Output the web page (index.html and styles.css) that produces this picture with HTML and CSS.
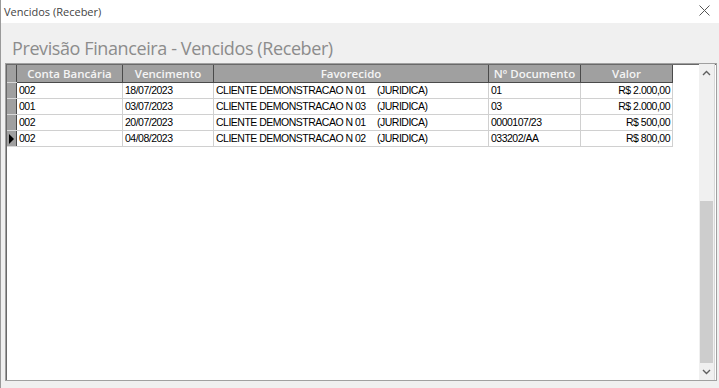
FILE: index.html
```html
<!DOCTYPE html>
<html lang="pt-BR">
  <head>
    <meta charset="UTF-8" />
    <title>Vencidos (Receber)</title>
    <link rel="stylesheet" href="styles.css">
  </head>
  <body>
    <div class="window">
      <!-- Title bar -->
      <div class="titlebar">
        <span class="title">Vencidos (Receber)</span>
        <span class="close">
          <svg width="11" height="11" viewBox="0 0 11 11">
            <path d="M0.5 0.5 L10.5 10.5 M10.5 0.5 L0.5 10.5" stroke="#555" stroke-width="1" fill="none" />
          </svg>
        </span>
      </div>

      <div class="content">
        <h1 class="heading">Previsão Financeira - Vencidos (Receber)</h1>

        <div class="grid">
          <div class="grid-body">
            <table class="data">
              <thead>
                <tr>
                  <th class="ind"></th>
                  <th class="c-conta">Conta Bancária</th>
                  <th class="c-venc">Vencimento</th>
                  <th class="c-fav">Favorecido</th>
                  <th class="c-doc">Nº Documento</th>
                  <th class="c-valor">Valor</th>
                </tr>
              </thead>
              <tbody>
                <tr>
                  <td class="ind"></td>
                  <td>002</td>
                  <td>18/07/2023</td>
                  <td><span class="nome">CLIENTE DEMONSTRACAO N 01</span>(JURIDICA)</td>
                  <td>01</td>
                  <td class="num">R$ 2.000,00</td>
                </tr>
                <tr>
                  <td class="ind"></td>
                  <td>001</td>
                  <td>03/07/2023</td>
                  <td><span class="nome">CLIENTE DEMONSTRACAO N 03</span>(JURIDICA)</td>
                  <td>03</td>
                  <td class="num">R$ 2.000,00</td>
                </tr>
                <tr>
                  <td class="ind"></td>
                  <td>002</td>
                  <td>20/07/2023</td>
                  <td><span class="nome">CLIENTE DEMONSTRACAO N 01</span>(JURIDICA)</td>
                  <td>0000107/23</td>
                  <td class="num">R$ 500,00</td>
                </tr>
                <tr>
                  <td class="ind current"><span class="arrow"></span></td>
                  <td>002</td>
                  <td>04/08/2023</td>
                  <td><span class="nome">CLIENTE DEMONSTRACAO N 02</span>(JURIDICA)</td>
                  <td>033202/AA</td>
                  <td class="num">R$ 800,00</td>
                </tr>
              </tbody>
            </table>
          </div>

          <!-- Vertical scrollbar -->
          <div class="scrollbar">
            <span class="sb-btn">
              <svg width="9" height="6" viewBox="0 0 9 6">
                <path d="M1 5 L4.5 1.5 L8 5" stroke="#606060" stroke-width="1.4" fill="none" />
              </svg>
            </span>
            <div class="sb-track">
              <div class="sb-thumb"></div>
            </div>
            <span class="sb-btn">
              <svg width="9" height="6" viewBox="0 0 9 6">
                <path d="M1 1 L4.5 4.5 L8 1" stroke="#606060" stroke-width="1.4" fill="none" />
              </svg>
            </span>
          </div>
        </div>
      </div>
    </div>
  </body>
</html>
```

FILE: styles.css
```css
html, body {
  margin: 0;
  height: 100%;
}

body {
  font-family: "Liberation Sans", Arial, sans-serif;
  background: #f0f0f0;
  overflow: hidden;
}

.window {
  height: 388px;
  border-left: 1px solid #9a9a9a;
  display: flex;
  flex-direction: column;
}

.titlebar {
  height: 23px;
  background: #ffffff;
  display: flex;
  justify-content: space-between;
  align-items: center;
  padding: 0 9px 0 3px;
}

.title {
  font-family: "Open Sans", "Noto Sans", sans-serif;
  font-size: 11px;
  color: #444;
  margin-top: -1px;
}

.close {
  display: flex;
  margin-top: -3px;
}

.content {
  flex: 1;
  display: flex;
  flex-direction: column;
  padding: 0 2px 7px 4px;
}

.heading {
  font-family: "Open Sans", "Noto Sans", sans-serif;
  font-weight: normal;
  font-size: 18px;
  letter-spacing: -0.4px;
  color: #8c8c8c;
  margin: 11px 0 0 7px;
  height: 29px;
  line-height: 29px;
}

.grid {
  flex: 1;
  display: flex;
  border: 1px solid #a0a0a0;
  box-shadow: inset 1px 1px 0 #696969;
  padding: 1px 0 0 1px;
  background: #ffffff;
}

.grid-body {
  flex: 1;
  background: #ffffff;
}

.data {
  border-collapse: collapse;
  table-layout: fixed;
  font-size: 10.5px;
  color: #000;
}

.data th {
  height: 17px;
  padding: 0;
  background: #a0a0a0;
  color: #f4f4f4;
  font-family: "Open Sans", "Noto Sans", sans-serif;
  font-weight: 600;
  font-size: 11.5px;
  text-align: center;
  border-right: 1px solid #4a4a4a;
  border-left: 1px solid #c8c8c8;
  border-bottom: 1px solid #4a4a4a;
  line-height: 15px;
}

.data td {
  height: 15px;
  padding: 0 2px;
  border-right: 1px solid #d0d0d0;
  border-bottom: 1px solid #d0d0d0;
  white-space: nowrap;
  overflow: hidden;
  line-height: 15px;
  letter-spacing: -0.5px;
}

.data .ind {
  width: 9px;
  padding: 0;
  background: #a0a0a0;
  border-right: 1px solid #4a4a4a;
  border-bottom: 1px solid #d8d8d8;
}

.data th.ind {
  border-left: none;
}

.c-conta { width: 105px; }
.c-venc { width: 90px; }
.c-fav { width: 274px; }
.c-doc { width: 91px; }
.c-valor { width: 91px; }

.nome {
  display: inline-block;
  width: 161px;
}

.data td.num {
  text-align: right;
  padding-right: 2px;
}

.arrow {
  display: block;
  width: 0;
  height: 0;
  margin-left: 2px;
  border-top: 5px solid transparent;
  border-bottom: 5px solid transparent;
  border-left: 5px solid #000;
}

.scrollbar {
  width: 15px;
  margin: -1px 1px 0 0;
  background: #f0f0f0;
  display: flex;
  flex-direction: column;
  border-right: 1px solid #d8d8d8;
}

.sb-btn {
  height: 17px;
  display: flex;
  align-items: center;
  justify-content: center;
}

.sb-track {
  flex: 1;
  display: flex;
  flex-direction: column;
  justify-content: flex-end;
}

.sb-thumb {
  height: 162px;
  margin: 0 1px;
  background: #cdcdcd;
}
```
